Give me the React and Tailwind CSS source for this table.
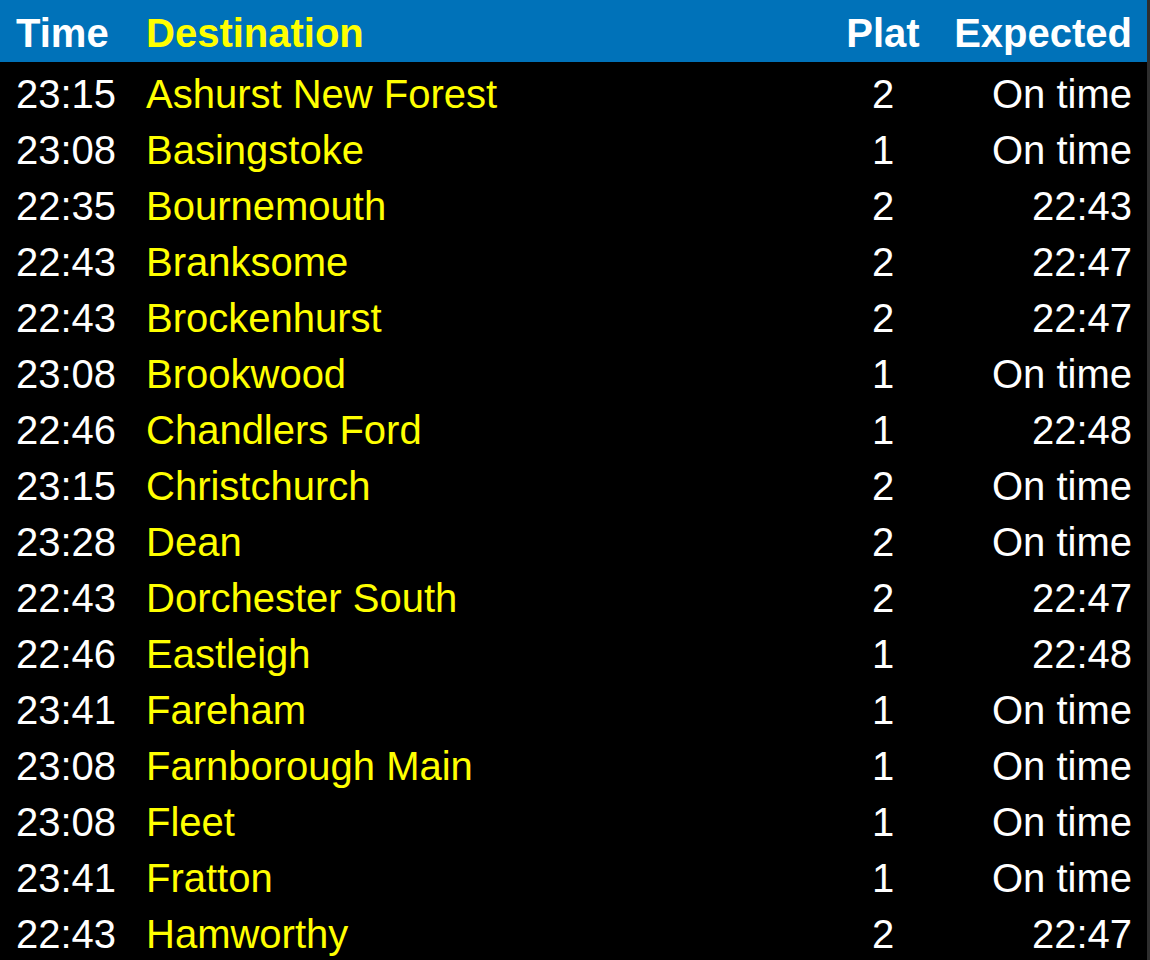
import React from 'react';

const departures = [
  { time: '23:15', dest: 'Ashurst New Forest', plat: '2', expected: 'On time' },
  { time: '23:08', dest: 'Basingstoke', plat: '1', expected: 'On time' },
  { time: '22:35', dest: 'Bournemouth', plat: '2', expected: '22:43' },
  { time: '22:43', dest: 'Branksome', plat: '2', expected: '22:47' },
  { time: '22:43', dest: 'Brockenhurst', plat: '2', expected: '22:47' },
  { time: '23:08', dest: 'Brookwood', plat: '1', expected: 'On time' },
  { time: '22:46', dest: 'Chandlers Ford', plat: '1', expected: '22:48' },
  { time: '23:15', dest: 'Christchurch', plat: '2', expected: 'On time' },
  { time: '23:28', dest: 'Dean', plat: '2', expected: 'On time' },
  { time: '22:43', dest: 'Dorchester South', plat: '2', expected: '22:47' },
  { time: '22:46', dest: 'Eastleigh', plat: '1', expected: '22:48' },
  { time: '23:41', dest: 'Fareham', plat: '1', expected: 'On time' },
  { time: '23:08', dest: 'Farnborough Main', plat: '1', expected: 'On time' },
  { time: '23:08', dest: 'Fleet', plat: '1', expected: 'On time' },
  { time: '23:41', dest: 'Fratton', plat: '1', expected: 'On time' },
  { time: '22:43', dest: 'Hamworthy', plat: '2', expected: '22:47' },
];

const cols = 'grid grid-cols-[130px_1fr_74px_212px] pl-4 pr-[15px]';

export default function App() {
  return (
    <div
      className="w-[1150px] h-[960px] overflow-hidden bg-black border-r-[3px] border-[#2e2e2e] text-[40px]"
      style={{ fontFamily: '"Liberation Sans", Arial, Helvetica, sans-serif' }}
    >
      {/* Header */}
      <div className={`${cols} h-[62px] bg-[#0072b9] font-bold leading-[62px] pt-[2px]`}>
        <div className="text-white">Time</div>
        <div className="text-[#ffff00]">Destination</div>
        <div className="text-white text-center">Plat</div>
        <div className="text-white text-right">Expected</div>
      </div>

      {/* Rows */}
      <div className="pt-[4px]">
        {departures.map((d, i) => (
          <div key={i} className={`${cols} h-[56px] leading-[56px] whitespace-nowrap`}>
            <div className="text-white">{d.time}</div>
            <div className="text-[#ffff00]">{d.dest}</div>
            <div className="text-white text-center">{d.plat}</div>
            <div className="text-white text-right">{d.expected}</div>
          </div>
        ))}
      </div>
    </div>
  );
}
